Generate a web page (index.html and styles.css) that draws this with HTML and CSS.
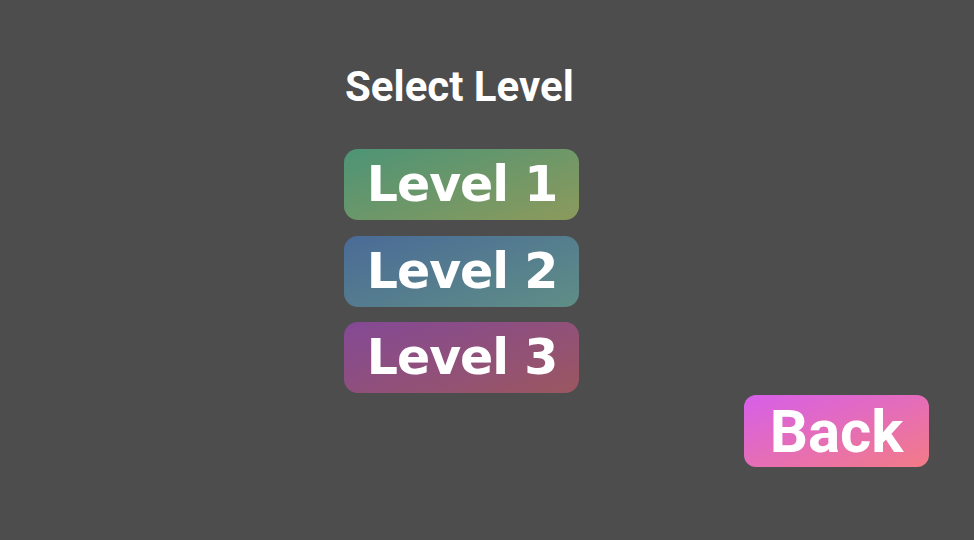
FILE: index.html
```html
<!DOCTYPE html>
<html lang="en">
<head>
    <meta charset="UTF-8">
    <meta name="viewport" content="width=device-width, initial-scale=1.0">
    <title>Select Level</title>
    <link rel="stylesheet" href="styles.css">
</head>
<body>
    <div class="screen">
        <div class="menu">
            <h1 class="menu-title">Select Level</h1>
            <div class="levels">
                <button class="level-btn level-1">Level 1</button>
                <button class="level-btn level-2">Level 2</button>
                <button class="level-btn level-3">Level 3</button>
            </div>
        </div>
        <div class="footer">
            <button class="back-btn">Back</button>
        </div>
    </div>
</body>
</html>
```

FILE: styles.css
```css
* {
    box-sizing: border-box;
    margin: 0;
    padding: 0;
}

html, body {
    height: 100%;
}

body {
    background: #4d4d4d;
    font-family: Roboto, "Liberation Sans", sans-serif;
    color: white;
    overflow: hidden;
}

.screen {
    display: flex;
    flex-direction: column;
    padding-top: 63px;
}

.menu {
    display: flex;
    flex-direction: column;
    align-items: flex-start;
    padding-left: 344px;
}

.menu-title {
    font-size: 42px;
    font-weight: 700;
    line-height: 48px;
    margin-bottom: 38px;
    padding-left: 1px;
}

.levels {
    display: flex;
    flex-direction: column;
    gap: 15.5px;
}

button {
    border: none;
    color: white;
    cursor: pointer;
}

.level-btn {
    width: 235px;
    height: 71px;
    border-radius: 14px;
    font-family: "DejaVu Sans", sans-serif;
    font-size: 49px;
    font-weight: 700;
    letter-spacing: -1px;
    padding-left: 1px;
    display: flex;
    align-items: center;
    justify-content: center;
}

.level-1 {
    background: linear-gradient(160deg, #4d9476 0%, #8c9a5c 100%);
}

.level-2 {
    background: linear-gradient(160deg, #4a6b97 0%, #5f8e86 100%);
}

.level-3 {
    background: linear-gradient(160deg, #844996 0%, #9b5760 100%);
}

.footer {
    display: flex;
    justify-content: flex-end;
    padding-right: 45px;
    margin-top: 2px;
}

.back-btn {
    width: 185px;
    height: 72px;
    border-radius: 12px;
    background: linear-gradient(160deg, #d65fea 0%, #f37b86 100%);
    font-family: Roboto, sans-serif;
    font-size: 60px;
    font-weight: 700;
    display: flex;
    align-items: center;
    justify-content: center;
}
```
